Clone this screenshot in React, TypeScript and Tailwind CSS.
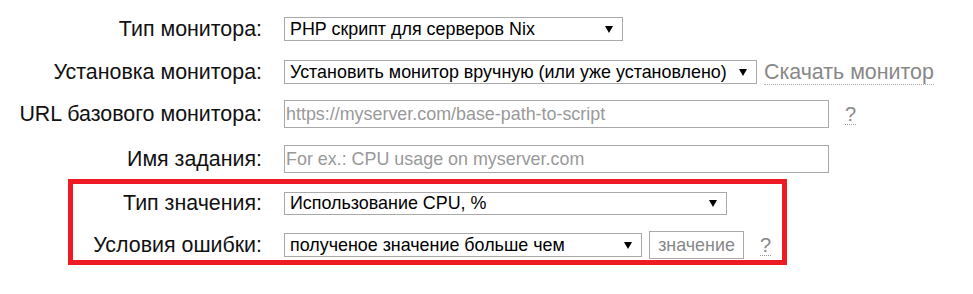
import type { ReactNode } from 'react'

const labelFont = { fontFamily: '"Liberation Sans", Arial, sans-serif' }

function Label({ children, width }: { children: ReactNode; width: string }) {
  return (
    <div className={`${width} shrink-0 text-right text-[21.4px] leading-6 text-[#111] pr-[22px]`}>
      {children}
    </div>
  )
}

function Arrow() {
  return (
    <svg width="8" height="7" viewBox="0 0 8 7" className="shrink-0 ml-2">
      <polygon points="0,0 8,0 4,7" fill="#000" />
    </svg>
  )
}

function FakeSelect({ value, className }: { value: string; className: string }) {
  return (
    <div
      className={`flex items-center justify-between border border-[#a9a9a9] bg-white pl-[5px] pr-[9px] text-[17.9px] text-black ${className}`}
    >
      <span className="whitespace-nowrap">{value}</span>
      <Arrow />
    </div>
  )
}

function TextInput({ placeholder }: { placeholder: string }) {
  return (
    <input
      placeholder={placeholder}
      className="w-[545px] h-[28px] border border-solid border-[#a9a9a9] px-[1px] text-[17.9px] text-black placeholder:text-[#999] outline-none"
    />
  )
}

function Hint({ className }: { className?: string }) {
  return (
    <span className={`text-[20px] leading-5 text-[#888] border-b border-dotted border-[#999] ${className ?? ''}`}>?</span>
  )
}

export default function App() {
  return (
    <div className="w-[973px] h-[294px] bg-white pt-[17px]" style={labelFont}>
      <div className="flex items-center h-6">
        <Label width="w-[284px]">Тип монитора:</Label>
        <FakeSelect value="PHP скрипт для серверов Nix" className="w-[339px] h-6" />
      </div>

      <div className="flex items-center h-6 mt-[19px]">
        <Label width="w-[284px]">Установка монитора:</Label>
        <FakeSelect value="Установить монитор вручную (или уже установлено)" className="w-[473px] h-6" />
        <span className="ml-[7px] text-[21.4px] leading-6 text-[#888] border-b border-dotted border-[#aaa]">
          Скачать монитор
        </span>
      </div>

      <div className="flex items-center h-[28px] mt-[16px]">
        <Label width="w-[284px]">URL базового монитора:</Label>
        <TextInput placeholder="https://myserver.com/base-path-to-script" />
        <Hint className="ml-[16px]" />
      </div>

      <div className="flex items-center h-[28px] mt-[17px]">
        <Label width="w-[284px]">Имя задания:</Label>
        <TextInput placeholder="For ex.: CPU usage on myserver.com" />
      </div>

      <div className="ml-[68px] mt-[6px] w-[719px] border-[5px] border-[#ed1c24] pt-[8px] pb-[1px]">
        <div className="flex items-center h-[22px]">
          <Label width="w-[211px]">Тип значения:</Label>
          <FakeSelect value="Использование CPU, %" className="w-[443px] h-[23px]" />
        </div>
        <div className="flex items-center h-[28px] mt-[17px]">
          <Label width="w-[211px]">Условия ошибки:</Label>
          <FakeSelect value="полученое значение больше чем" className="w-[358px] h-6" />
          <div className="ml-[7px] h-[28px] w-[95px] border border-[#a9a9a9] flex items-center justify-center text-[17.9px] text-[#888]">
            значение
          </div>
          <Hint className="ml-[16px]" />
        </div>
      </div>
    </div>
  )
}
